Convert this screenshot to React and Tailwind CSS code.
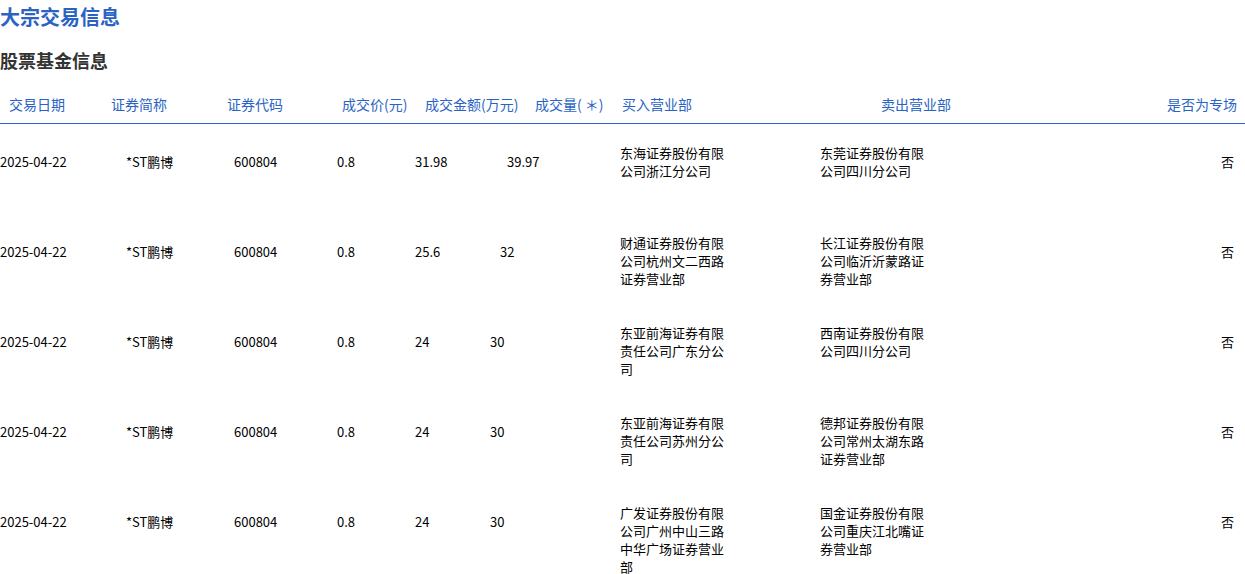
const rows = [
  { v: "31.98", pad: "pl-[17px]", q: "39.97", buy: "东海证券股份有限公司浙江分公司", sell: "东莞证券股份有限公司四川分公司" },
  { v: "25.6", pad: "pl-[10px]", q: "32", buy: "财通证券股份有限公司杭州文二西路证券营业部", sell: "长江证券股份有限公司临沂沂蒙路证券营业部" },
  { v: "24", pad: "pl-0", q: "30", buy: "东亚前海证券有限责任公司广东分公司", sell: "西南证券股份有限公司四川分公司" },
  { v: "24", pad: "pl-0", q: "30", buy: "东亚前海证券有限责任公司苏州分公司", sell: "德邦证券股份有限公司常州太湖东路证券营业部" },
  { v: "24", pad: "pl-0", q: "30", buy: "广发证券股份有限公司广州中山三路中华广场证券营业部", sell: "国金证券股份有限公司重庆江北嘴证券营业部" },
];

const font = { fontFamily: '"Noto Sans CJK SC", "Noto Sans", sans-serif' };

export default function App() {
  return (
    <div className="w-[1245px] h-[574px] overflow-hidden bg-white text-[13px] text-black" style={font}>
      <h1 className="text-[20px] font-bold text-[#2a63c4] leading-[34px]">大宗交易信息</h1>
      <h2 className="mt-[9px] text-[18px] font-bold text-[#333] leading-[34px]">股票基金信息</h2>
      <div className="mt-[11px] flex h-[36px] items-center border-b border-[#2a63c4] pb-[2px] pl-[9px] pr-[8px] text-[14px] text-[#2a63c4]">
        <span className="w-[102px]">交易日期</span>
        <span className="w-[116px]">证券简称</span>
        <span className="w-[115px]">证券代码</span>
        <span className="w-[83px]">成交价(元)</span>
        <span className="w-[110px]">成交金额(万元)</span>
        <span className="w-[87px]">成交量( ＊)</span>
        <span className="w-[259px]">买入营业部</span>
        <span className="flex-1">卖出营业部</span>
        <span>是否为专场</span>
      </div>
      {rows.map((r, i) => (
        <div key={i} className="flex h-[90px] items-start pt-[20px] leading-[18px]">
          <div className="flex pt-[9px]">
            <span className="w-[126px]">2025-04-22</span>
            <span className="w-[108px]">*ST鹏博</span>
            <span className="w-[103px]">600804</span>
            <span className="w-[78px]">0.8</span>
            <span className="w-[75px]">{r.v}</span>
            <span className={"w-[130px] " + r.pad}>{r.q}</span>
          </div>
          <div className="w-[200px]"><div className="w-[105px] break-all">{r.buy}</div></div>
          <div className="flex-1"><div className="w-[105px] break-all">{r.sell}</div></div>
          <div className="pt-[9px] pr-[11px]">否</div>
        </div>
      ))}
    </div>
  );
}
